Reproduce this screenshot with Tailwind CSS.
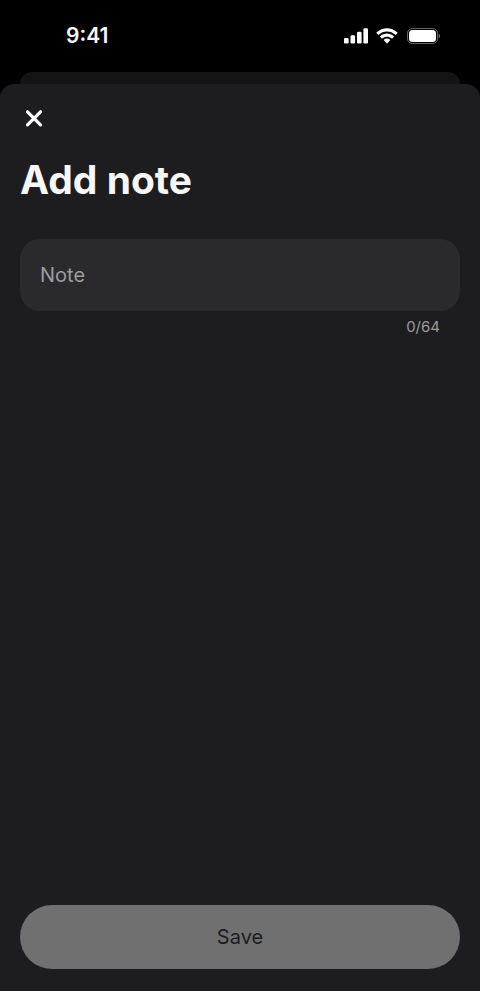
<!DOCTYPE html>
<html lang="en">

<head>
  <meta charset="UTF-8" />
  <meta name="viewport" content="width=device-width, initial-scale=1.0" />
  <title>Add note</title>
  <script src="https://cdn.jsdelivr.net/npm/@tailwindcss/browser@4"></script>
</head>

<body class="bg-black text-[#f7f7f8] font-[Inter,sans-serif] min-h-screen flex flex-col">
  <!-- Status bar -->
  <header class="h-[72px] pl-[66px] pr-10 flex items-center justify-between">
    <time class="text-[21px] leading-7 font-semibold">9:41</time>
    <div class="flex items-center gap-2">
      <svg class="w-6 h-4" viewBox="0 0 24 16" fill="#fff" aria-hidden="true">
        <rect x="0" y="10" width="4.6" height="5.5" rx="1.3" />
        <rect x="6.5" y="7.2" width="4.6" height="8.3" rx="1.3" />
        <rect x="13" y="3.8" width="4.6" height="11.7" rx="1.3" />
        <rect x="19.4" y="0.3" width="4.6" height="15.2" rx="1.3" />
      </svg>
      <svg class="w-[22px] h-4" viewBox="0 0 17 12.3" fill="#fff" aria-hidden="true">
        <path d="M8.5 2.6c2.4 0 4.7.9 6.4 2.6.1.1.3.1.5 0l1.2-1.3c.2-.1.2-.4 0-.5C12-1 5-1 .4 3.4c-.2.1-.2.4 0 .5l1.2 1.3c.2.1.4.1.5 0C3.8 3.5 6.1 2.6 8.5 2.6z" />
        <path d="M8.5 6.7c1.3 0 2.6.5 3.6 1.4.1.1.4.1.5 0l1.2-1.3c.2-.1.2-.4 0-.5-3-2.8-7.6-2.8-10.6 0-.2.1-.2.4 0 .5l1.2 1.3c.1.1.4.1.5 0 1-.9 2.300-1.400 3.600-1.400z" />
        <path d="M10.9 9.5c.2-.1.2-.4 0-.5-1.400-1.200-3.400-1.200-4.800 0-.2.1-.2.4 0 .5l2.100 2.200c.2.2.4.2.6 0z" />
      </svg>
      <svg class="w-[34px] h-[18px]" viewBox="0 0 34 18" fill="none" aria-hidden="true">
        <rect x="1.500" y="1.500" width="30" height="15" rx="5" stroke="#fff" stroke-opacity=".4" />
        <rect x="3" y="3" width="27" height="12" rx="3.500" fill="#fff" />
        <path d="M32.700 6.500v5c.8-.4 1.300-1.400 1.300-2.500s-.5-2.100-1.300-2.500z" fill="#fff" fill-opacity=".45" />
      </svg>
    </div>
  </header>

  <!-- Edge of the sheet underneath -->
  <div class="h-3 mx-5 rounded-t-xl bg-[#141414]"></div>

  <!-- Note sheet -->
  <main class="flex-1 flex flex-col rounded-t-[14px] bg-[#1d1d1f] px-5 pt-5 pb-[22px]">
    <button type="button" aria-label="Close" class="size-7 flex items-center justify-center">
      <svg class="size-5" viewBox="0 0 20 20" fill="none" stroke="#fff" stroke-width="3.200" stroke-linecap="round" aria-hidden="true">
        <path d="M3.500 3.800l13 13M16.500 3.800l-13 13" />
      </svg>
    </button>

    <form class="flex-1 flex flex-col">
      <h1 class="mt-6 text-[39px] leading-12 font-bold">Add note</h1>

      <input id="note" type="text" maxlength="64" placeholder="Note" aria-label="Note"
        class="mt-[35px] w-full h-[72px] shrink-0 rounded-[20px] bg-[#2a2a2c] px-5 text-xl placeholder:text-[#9c9c9f] outline-none" />
      <output id="count" for="note" class="mt-1 pr-5 text-right text-[15px] leading-6 text-[#9c9c9f]">0/64</output>

      <button type="submit" class="mt-auto w-full h-16 rounded-full bg-[#707070] text-xl text-[#1d1d1f]">Save</button>
    </form>
  </main>

  <script>
    const note = document.getElementById('note');

    note.oninput = () => {
      document.getElementById('count').textContent = `${note.value.length}/64`;
    };
  </script>
</body>

</html>
